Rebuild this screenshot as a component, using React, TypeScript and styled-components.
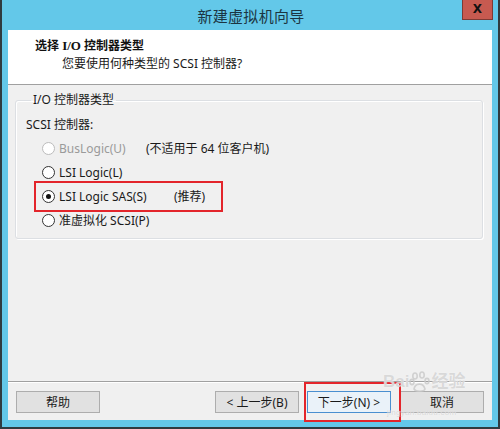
import React from "react";
import styled, { createGlobalStyle } from "styled-components";

const Global = createGlobalStyle`
  html, body { margin: 0; padding: 0; background: #ffffff; }
  body { font-family: "Noto Sans", "Noto Sans CJK SC", sans-serif; }
`;

const CJK = `"Noto Sans", "Noto Sans CJK SC", sans-serif`;

const Window = styled.div`
  position: relative;
  width: 500px;
  height: 429px;
  box-sizing: border-box;
  background: #63c8e9;
  border-left: 2px solid #2f3b40;
  border-right: 2px solid #2f3b40;
  border-bottom: 2px solid #2f3b40;
  display: flex;
  flex-direction: column;
  overflow: hidden;
`;

const TitleBar = styled.div`
  height: 30px;
  flex: none;
  display: flex;
  align-items: center;
  justify-content: center;
  position: relative;
`;

const Title = styled.div`
  font-family: ${CJK};
  font-size: 15px;
  color: #1b3542;
  letter-spacing: 0.3px;
  margin-left: 2px;
`;

const CloseButton = styled.div`
  position: absolute;
  top: -1px;
  right: 5px;
  width: 31px;
  height: 21px;
  box-sizing: border-box;
  background: #c75a50;
  border: 1px solid #7d3b35;
  border-top: none;
  display: flex;
  align-items: center;
  justify-content: center;
  font-family: "DejaVu Sans", sans-serif;
  font-weight: bold;
  font-size: 12px;
  color: #111;
`;

const Client = styled.div`
  flex: 1;
  margin: 0 6px 7px 6px;
  background: #f0f0f0;
  display: flex;
  flex-direction: column;
`;

const Header = styled.div`
  height: 55px;
  flex: none;
  background: #ffffff;
  border-bottom: 1px solid #a0a0a0;
  box-sizing: border-box;
  padding: 7px 0 0 27px;
  font-family: ${CJK};
  font-size: 12px;
  color: #111;
`;

const HeaderTitle = styled.div`
  font-weight: bold;
  line-height: 17px;
  font-size: 12px;
`;

const SerifPart = styled.span`
  font-family: "Liberation Serif", serif;
  font-size: 13px;
`;

const HeaderSub = styled.div`
  margin-left: 27px;
  line-height: 17px;
  margin-top: 1px;
  color: #1a1a1a;
`;

const Main = styled.div`
  flex: 1;
  padding: 8px 9px 0 7px;
`;

const GroupBox = styled.fieldset`
  margin: 0;
  padding: 0 0 6px 10px;
  border: 1px solid #dcdfe3;
  border-radius: 3px;
  box-shadow: inset 1px 1px 0 #fff, 1px 1px 0 #fff;
  font-family: ${CJK};
  font-size: 12px;
  color: #1a1a1a;
`;

const Legend = styled.legend`
  padding: 0 2px;
  margin-left: 5px;
  line-height: 14px;
  font-size: 12px;
`;

const SectionLabel = styled.div`
  line-height: 16px;
  margin-top: 10px;
  margin-bottom: 3px;
`;

const Row = styled.div`
  display: flex;
  align-items: center;
  height: 24px;
  padding-left: 16px;
`;

const RadioCircle = styled.span<{ $disabled?: boolean; $checked?: boolean }>`
  width: 13px;
  height: 13px;
  box-sizing: border-box;
  border-radius: 50%;
  border: 1px solid ${(p) => (p.$disabled ? "#bcbcbc" : "#333")};
  background: #fff;
  display: flex;
  align-items: center;
  justify-content: center;
  flex: none;
  &::after {
    content: "";
    display: ${(p) => (p.$checked ? "block" : "none")};
    width: 5px;
    height: 5px;
    border-radius: 50%;
    background: #111;
  }
`;

const RadioText = styled.span<{ $disabled?: boolean; $width: number }>`
  margin-left: 4px;
  width: ${(p) => p.$width}px;
  flex: none;
  color: ${(p) => (p.$disabled ? "#9a9a9a" : "#1a1a1a")};
  white-space: nowrap;
`;

const Note = styled.span`
  white-space: nowrap;
  color: #1a1a1a;
`;

const Highlight = styled.div`
  position: absolute;
  border: 2px solid #e3252b;
  box-sizing: border-box;
  pointer-events: none;
`;

const Footer = styled.div`
  flex: none;
  border-top: 1px solid #a0a0a0;
  box-shadow: inset 0 1px 0 #fff;
  padding: 9px 8px 7px 8px;
  display: flex;
  align-items: center;
`;

const Button = styled.div<{ $default?: boolean; $gap?: number }>`
  width: 84px;
  height: 22px;
  margin-left: ${(p) => p.$gap ?? 0}px;
  box-sizing: border-box;
  border: 1px solid ${(p) => (p.$default ? "#4a8fd0" : "#adadad")};
  background: ${(p) => (p.$default ? "#eaf2f9" : "#e1e1e1")};
  display: flex;
  align-items: center;
  justify-content: center;
  font-family: ${CJK};
  font-size: 12px;
  color: #1a1a1a;
`;

const Spacer = styled.div`
  flex: 1;
`;

const Watermark = styled.div`
  position: absolute;
  left: 381px;
  top: 370px;
  width: 100px;
  height: 48px;
  pointer-events: none;
  color: rgba(205, 205, 205, 0.75);
  text-shadow: 0 0 1px rgba(255, 255, 255, 0.9);
  font-family: "Liberation Sans", "Noto Sans CJK SC", sans-serif;
`;

const WmTop = styled.div`
  display: flex;
  align-items: center;
  font-size: 17px;
  font-weight: bold;
  line-height: 24px;
`;

const WmSub = styled.div`
  font-size: 8px;
  line-height: 9px;
  margin-top: 14px;
  margin-left: 4px;
  letter-spacing: 0.3px;
`;

const radios = [
  { label: "BusLogic(U)", disabled: true, note: "(不适用于 64 位客户机)", width: 87 },
  { label: "LSI Logic(L)" },
  { label: "LSI Logic SAS(S)", checked: true, note: "(推荐)", width: 115 },
  { label: "准虚拟化 SCSI(P)" },
];

export default function App() {
  return (
    <>
      <Global />
      <Window>
        <TitleBar>
          <Title>新建虚拟机向导</Title>
          <CloseButton>X</CloseButton>
        </TitleBar>
        <Client>
          <Header>
            <HeaderTitle>
              选择 <SerifPart>I/O</SerifPart> 控制器类型
            </HeaderTitle>
            <HeaderSub>您要使用何种类型的 SCSI 控制器?</HeaderSub>
          </Header>
          <Main>
            <GroupBox>
              <Legend>I/O 控制器类型</Legend>
              <SectionLabel>SCSI 控制器:</SectionLabel>
              {radios.map((r) => (
                <Row key={r.label}>
                  <RadioCircle $disabled={r.disabled} $checked={r.checked} />
                  <RadioText $disabled={r.disabled} $width={r.width ?? 140}>
                    {r.label}
                  </RadioText>
                  {r.note && <Note>{r.note}</Note>}
                </Row>
              ))}
            </GroupBox>
          </Main>
          <Footer>
            <Button>帮助</Button>
            <Spacer />
            <Button>&lt; 上一步(B)</Button>
            <Button $default $gap={8}>下一步(N) &gt;</Button>
            <Button $gap={9}>取消</Button>
          </Footer>
        </Client>
        <Highlight style={{ left: 32, top: 181, width: 189, height: 31 }} />
        <Highlight style={{ left: 302, top: 382, width: 97, height: 40 }} />
        <Watermark>
          <WmTop>
            Bai
            <svg width="22" height="22" viewBox="0 0 22 22">
              <g fill="none" stroke="rgba(200,200,200,0.8)" strokeWidth="1.6">
                <ellipse cx="6" cy="5" rx="2.2" ry="3" />
                <ellipse cx="13" cy="4" rx="2.2" ry="3" />
                <ellipse cx="3" cy="11" rx="2" ry="2.6" />
                <ellipse cx="18" cy="10" rx="2" ry="2.6" />
                <path d="M5 18 C6 12 14 11 16 18 C15 21 7 21 5 18 Z" />
              </g>
            </svg>
            经验
          </WmTop>
          <WmSub>jingyan.baidu.com</WmSub>
        </Watermark>
      </Window>
    </>
  );
}
